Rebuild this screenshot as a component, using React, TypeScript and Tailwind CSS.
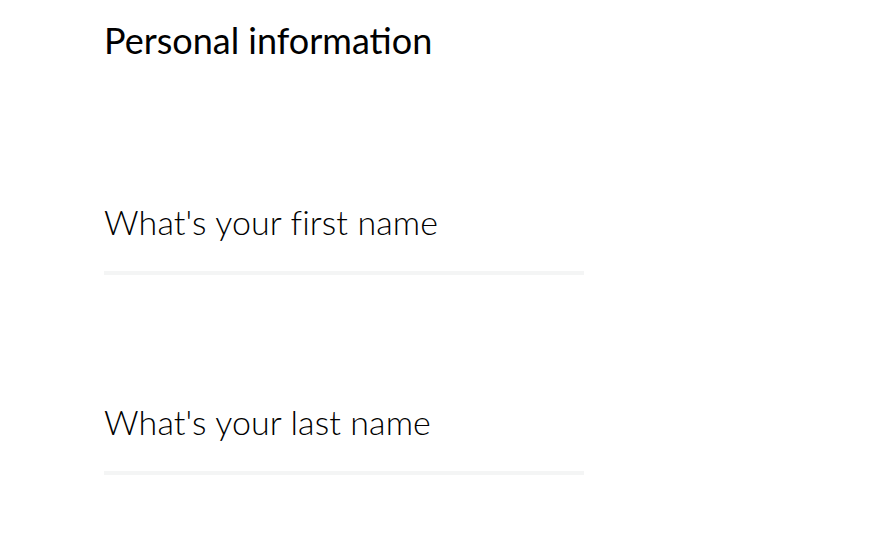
export default function App() {
  return (
    <div className="min-h-[539px] bg-white pl-[104px] text-black" style={{ fontFamily: 'Lato, "Noto Sans", sans-serif' }}>
      <h1 className="pt-[20px] text-[36px] leading-[40px] font-normal">Personal information</h1>
      <div className="mt-[142px] w-[480px]">
        <label className="block text-[34px] leading-[40px] font-light tracking-[0.1px]">What's your first name</label>
        <input className="block h-[33px] w-full border-b-4 border-[#f4f5f5] outline-none" />
      </div>
      <div className="mt-[127px] w-[480px]">
        <label className="block text-[34px] leading-[40px] font-light tracking-[0.1px]">What's your last name</label>
        <input className="block h-[33px] w-full border-b-4 border-[#f4f5f5] outline-none" />
      </div>
    </div>
  )
}
